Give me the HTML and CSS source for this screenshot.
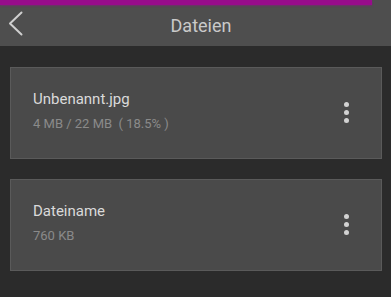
FILE: index.html
```html
<!DOCTYPE html>
<html lang="de">
<head>
<meta charset="utf-8">
<title>Dateien</title>
<link rel="stylesheet" href="styles.css">
</head>
<body>
<header class="topbar">
  <div class="progress"><div class="progress-fill" style="width: 372px"></div></div>
  <div class="nav">
    <button class="back" aria-label="Zurück">
      <svg width="30" height="41" viewBox="0 0 30 41"><polyline points="21.5,7.5 10,18.5 21.5,29.5" fill="none" stroke="#cfcfcf" stroke-width="2" stroke-linecap="round" stroke-linejoin="round"/></svg>
    </button>
    <h1 class="title">Dateien</h1>
    <span class="spacer"></span>
  </div>
</header>
<main class="list">
  <div class="card">
    <div class="info">
      <div class="name">Unbenannt.jpg</div>
      <div class="meta">4 MB / 22 MB &nbsp;( 18.5% )</div>
    </div>
    <div class="more"><span></span><span></span><span></span></div>
  </div>
  <div class="card">
    <div class="info">
      <div class="name">Dateiname</div>
      <div class="meta">760 KB</div>
    </div>
    <div class="more"><span></span><span></span><span></span></div>
  </div>
</main>
</body>
</html>
```
FILE: styles.css
```css
html, body {
  margin: 0;
  padding: 0;
  background: #2b2b2b;
  font-family: Roboto, "Liberation Sans", sans-serif;
}
.topbar {
  background: #4e4e4e;
  height: 46px;
  display: flex;
  flex-direction: column;
}
.progress {
  height: 5px;
}
.progress-fill {
  height: 5px;
  background: #970c8b;
  box-shadow: 0 1px 2px rgba(150, 12, 140, 0.5);
}
.nav {
  flex: 1;
  display: grid;
  grid-template-columns: 40px 1fr 40px;
  align-items: center;
}
.back {
  background: none;
  border: 0;
  padding: 0;
  margin: 0;
  display: block;
  height: 41px;
  width: 30px;
}
.back svg { display: block; }
.title {
  margin: 0;
  font-weight: 400;
  font-size: 18px;
  line-height: 41px;
  color: #c9c9c9;
  text-align: center;
  padding-left: 11px;
}
.list {
  padding: 21px 9px 0 10px;
  display: flex;
  flex-direction: column;
  gap: 20px;
}
.card {
  background: #4a4a4a;
  border: 1px solid #5a5a5a;
  display: flex;
  align-items: center;
  padding: 21px 32px 25px 22px;
}
.info {
  flex: 1;
}
.name {
  font-size: 15px;
  line-height: 20px;
  color: #dadada;
}
.meta {
  margin-top: 6px;
  font-size: 13px;
  line-height: 18px;
  color: #8a8a8a;
}
.more {
  display: flex;
  flex-direction: column;
  gap: 3px;
  margin-top: 2px;
}
.more span {
  width: 5px;
  height: 5px;
  border-radius: 50%;
  background: #d2d2d2;
}
```
